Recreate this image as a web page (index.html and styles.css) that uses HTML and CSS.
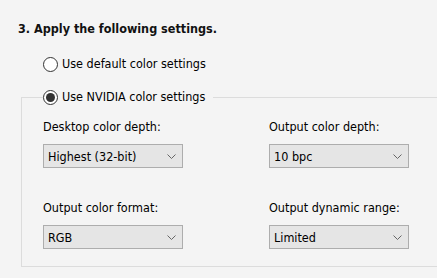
FILE: index.html
```html
<!DOCTYPE html>
<html>
<head>
<meta charset="utf-8">
<link rel="stylesheet" href="styles.css">
</head>
<body>
<div class="page">
  <h1 class="heading">3. Apply the following settings.</h1>
  <label class="radio radio-top">
    <span class="dot"></span>
    <span>Use default color settings</span>
  </label>
  <fieldset class="group">
    <legend class="legend">
      <label class="radio">
        <span class="dot checked"></span>
        <span>Use NVIDIA color settings</span>
      </label>
    </legend>
    <div class="grid">
      <div class="field">
        <div class="label">Desktop color depth:</div>
        <div class="select"><span>Highest (32-bit)</span><svg class="chev" width="9" height="5" viewBox="0 0 9 5"><path d="M0.5 0.5 L4.5 4.5 L8.5 0.5" fill="none" stroke="#666" stroke-width="1"/></svg></div>
      </div>
      <div class="field">
        <div class="label">Output color depth:</div>
        <div class="select"><span>10 bpc</span><svg class="chev" width="9" height="5" viewBox="0 0 9 5"><path d="M0.5 0.5 L4.5 4.5 L8.5 0.5" fill="none" stroke="#666" stroke-width="1"/></svg></div>
      </div>
      <div class="field">
        <div class="label">Output color format:</div>
        <div class="select"><span>RGB</span><svg class="chev" width="9" height="5" viewBox="0 0 9 5"><path d="M0.5 0.5 L4.5 4.5 L8.5 0.5" fill="none" stroke="#666" stroke-width="1"/></svg></div>
      </div>
      <div class="field">
        <div class="label">Output dynamic range:</div>
        <div class="select"><span>Limited</span><svg class="chev" width="9" height="5" viewBox="0 0 9 5"><path d="M0.5 0.5 L4.5 4.5 L8.5 0.5" fill="none" stroke="#666" stroke-width="1"/></svg></div>
      </div>
    </div>
  </fieldset>
</div>
</body>
</html>
```
FILE: styles.css
```css
html, body {
  margin: 0;
  padding: 0;
  background: #f4f4f4;
  overflow: hidden;
}
body {
  width: 437px;
  height: 278px;
  font-family: "DejaVu Sans Condensed", "DejaVu Sans", sans-serif;
  font-size: 12.5px;
  color: #000;
}
.page {
  padding: 21px 0 0 18px;
}
.heading {
  margin: 0;
  font-size: 12.5px;
  font-weight: bold;
  line-height: 16px;
  color: #111;
}
.radio {
  display: flex;
  align-items: center;
  gap: 4px;
  line-height: 16px;
}
.radio-top {
  margin: 19px 0 0 25px;
}
.dot {
  box-sizing: border-box;
  width: 15px;
  height: 15px;
  border: 1px solid #333;
  border-radius: 50%;
  background: #fff;
  display: flex;
  align-items: center;
  justify-content: center;
}
.dot.checked::after {
  content: "";
  width: 9px;
  height: 9px;
  border-radius: 50%;
  background: #333;
}
.group {
  margin: 17px 0 0 3px;
  padding: 0 0 0 21px;
  border: 1px solid #dcdcdc;
  border-right: none;
  min-width: 0;
  height: 178px;
  box-sizing: border-box;
}
.legend {
  margin-left: 0;
  padding: 0 8px 0 0;
}
.grid {
  display: grid;
  grid-template-columns: 226px 140px;
  row-gap: 32px;
  padding-top: 14px;
}
.label {
  line-height: 16px;
  margin-bottom: 9px;
}
.select {
  box-sizing: border-box;
  width: 140px;
  height: 24px;
  background: #e5e5e5;
  border: 1px solid #adadad;
  display: flex;
  align-items: center;
  justify-content: space-between;
  padding: 0 6px 0 4px;
}
.chev {
  display: block;
}
```
